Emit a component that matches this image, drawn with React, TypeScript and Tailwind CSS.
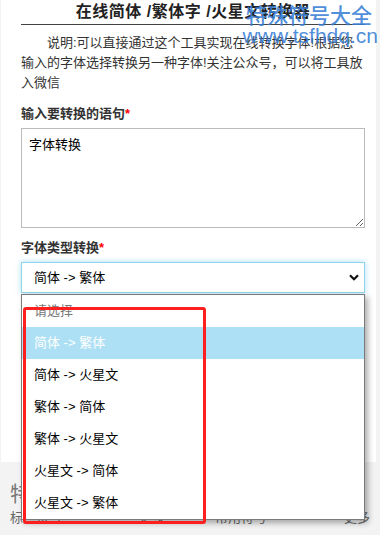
const options = [
  "请选择",
  "简体 -> 繁体",
  "简体 -> 火星文",
  "繁体 -> 简体",
  "繁体 -> 火星文",
  "火星文 -> 简体",
  "火星文 -> 繁体",
];

function Chevron() {
  return (
    <svg width="10" height="7" viewBox="0 0 10 7" className="shrink-0">
      <path d="M1 1.2 L5 5.2 L9 1.2" fill="none" stroke="#111" strokeWidth="2.2" />
    </svg>
  );
}

export default function App() {
  const font = "font-['Liberation_Sans','Noto_Sans_CJK_SC',sans-serif]";
  return (
    <div className={`relative h-[535px] w-[380px] overflow-hidden bg-[#f3f3f3] ${font} text-[#333]`}>
      <div className="ml-[1px] w-[375px] bg-white pl-[20px] pr-[11px] pb-[169px]">
        <h3 className="h-[25px] border-b border-[#444] text-center text-[16px] font-bold leading-[24px] tracking-[0.5px] text-[#222]">
          在线简体 /繁体字 /火星文转换器
        </h3>
        <p className="mt-[8px] indent-[2em] text-[13px] leading-[20px] text-[#333]">
          说明:可以直接通过这个工具实现在线转换字体!根据您输入的字体选择转换另一种字体!关注公众号，可以将工具放入微信
        </p>
        <label className="mt-[11px] block text-[13px] font-bold leading-[20px] text-[#333]">
          输入要转换的语句<span className="text-[#f00]">*</span>
        </label>
        <textarea
          readOnly
          value="字体转换"
          className="mt-[4px] block h-[100px] w-full border border-[#bbb] px-[7px] pt-[6px] text-[13px] leading-[20px] text-black outline-none"
        />
        <label className="mt-[10px] block text-[13px] font-bold leading-[20px] text-[#333]">
          字体类型转换<span className="text-[#f00]">*</span>
        </label>
        <div className="mt-[4px] flex h-[31px] items-center justify-between border border-[#8fd5ec] pl-[12px] pr-[5px] text-[13px] text-black shadow-[0_0_6px_rgba(102,196,233,0.55)]">
          <span>简体 -&gt; 繁体</span>
          <Chevron />
        </div>
      </div>

      <div className="px-[10px] pt-[20px] text-[#666]">
        <div className="text-[21px] leading-[24px] text-[#777]">特殊符号</div>
        <div className="mt-[2px] grid grid-cols-2 gap-[50px] text-[13px] leading-[20px]">
          <div className="flex justify-between">
            <span>标点符号</span>
            <span>更多</span>
          </div>
          <div className="flex justify-between">
            <span>常用符号</span>
            <span>更多</span>
          </div>
        </div>
      </div>

      {/* open select list */}
      <ul className="absolute left-[21px] top-[294px] w-[344px] border border-[#7a7a7a] bg-white shadow-[3px_3px_6px_rgba(0,0,0,0.32)]">
        {options.map((o, i) => (
          <li
            key={o}
            className={`flex h-[32px] items-center pl-[12px] text-[13px] ${
              i === 0 ? "text-[#777]" : i === 1 ? "bg-[#ade0f5] text-white" : "text-black"
            }`}
          >
            {o}
          </li>
        ))}
      </ul>

      {/* red annotation box */}
      <div className="absolute left-[23px] top-[307px] h-[217px] w-[183px] rounded-[3px] border-[3px] border-[#ff1f1f]" />

      {/* watermark */}
      <div className="pointer-events-none absolute right-[8px] top-[1px] font-['Noto_Sans_CJK_SC',sans-serif] text-[21px] font-medium leading-[26px] text-[#3a80d6]/90">
        特殊符号大全
      </div>
      <div className="pointer-events-none absolute right-[2px] top-[22px] font-['Liberation_Sans',sans-serif] text-[21px] leading-[28px] text-[#3a80d6]/90">
        www.tsfhdq.cn
      </div>
    </div>
  );
}
